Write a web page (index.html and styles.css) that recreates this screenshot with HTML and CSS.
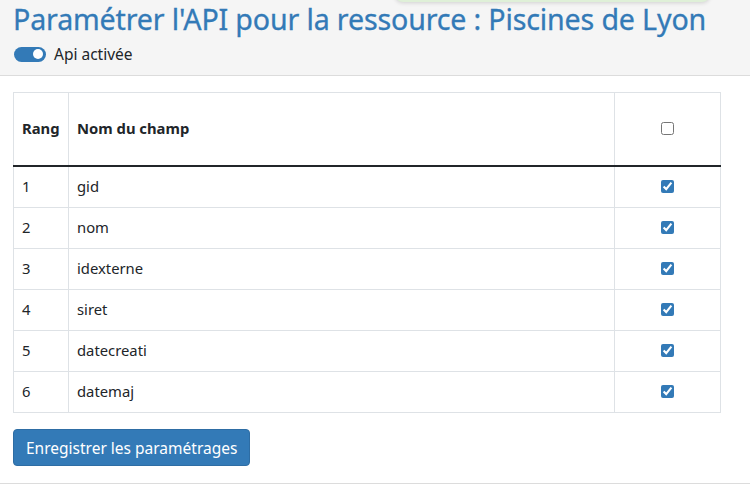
FILE: index.html
```html
<!DOCTYPE html>
<html lang="fr">
<head>
<meta charset="utf-8">
<title>Paramétrer l'API</title>
<link rel="stylesheet" href="styles.css">
</head>
<body>
<div class="toast"></div>
<header class="header">
  <h1 class="title">Paramétrer l'API pour la ressource : Piscines de Lyon</h1>
  <label class="switch-row">
    <span class="switch"><span class="knob"></span></span>
    <span class="switch-label">Api activée</span>
  </label>
</header>
<main class="main">
  <table class="fields">
    <thead>
      <tr>
        <th class="col-rank">Rang</th>
        <th class="col-name">Nom du champ</th>
        <th class="col-check"><input type="checkbox"></th>
      </tr>
    </thead>
    <tbody>
      <tr><td>1</td><td>gid</td><td class="col-check"><input type="checkbox" checked></td></tr>
      <tr><td>2</td><td>nom</td><td class="col-check"><input type="checkbox" checked></td></tr>
      <tr><td>3</td><td>idexterne</td><td class="col-check"><input type="checkbox" checked></td></tr>
      <tr><td>4</td><td>siret</td><td class="col-check"><input type="checkbox" checked></td></tr>
      <tr><td>5</td><td>datecreati</td><td class="col-check"><input type="checkbox" checked></td></tr>
      <tr><td>6</td><td>datemaj</td><td class="col-check"><input type="checkbox" checked></td></tr>
    </tbody>
  </table>
  <button class="btn" type="button">Enregistrer les paramétrages</button>
</main>
<footer class="footer"></footer>
</body>
</html>
```
FILE: styles.css
```css
html, body {
  margin: 0;
  padding: 0;
  background: #fff;
}
body {
  font-family: "Noto Sans", "Open Sans", sans-serif;
  color: #212529;
  position: relative;
  overflow: hidden;
  height: 495px;
}
.toast {
  position: absolute;
  left: 395px;
  top: -40px;
  width: 315px;
  height: 42px;
  background: #dff0d8;
  border-radius: 8px;
  box-shadow: 0 1px 4px rgba(0, 0, 0, 0.15);
  z-index: 2;
}
.header {
  background: #f5f5f5;
  border-bottom: 1px solid #dcdcdc;
  padding: 2px 13px 0;
  height: 73px;
  box-sizing: content-box;
}
.title {
  margin: 0;
  font-size: 28.6px;
  font-weight: 400;
  line-height: 34px;
  color: #337ab7;
  letter-spacing: -0.15px;
  white-space: nowrap;
  -webkit-text-stroke: 0.3px #337ab7;
}
.switch-row {
  display: flex;
  align-items: center;
  gap: 8px;
  margin-top: 8px;
  margin-left: 1px;
}
.switch {
  display: flex;
  align-items: center;
  justify-content: flex-end;
  width: 32px;
  height: 15px;
  border-radius: 8px;
  background: #337ab7;
  padding: 0 3px;
  box-sizing: border-box;
}
.knob {
  width: 10px;
  height: 10px;
  border-radius: 50%;
  background: #fff;
}
.switch-label {
  font-size: 15.5px;
  line-height: 20px;
  color: #212529;
}
.main {
  padding: 16px 13px 0;
}
.fields {
  width: 708px;
  border-collapse: collapse;
  font-size: 14.8px;
  border: 1px solid #dee2e6;
}
.fields th, .fields td {
  border-left: 1px solid #dee2e6;
  border-right: 1px solid #dee2e6;
  text-align: left;
  padding: 7px 8px 9px;
  line-height: 24px;
}
.fields th {
  height: 56px;
  font-weight: 700;
  border-bottom: 2px solid #212529;
}
.fields td {
  border-top: 1px solid #dee2e6;
}
.fields tbody tr:first-child td {
  border-top: none;
}
.col-rank {
  width: 38px;
}
.col-check {
  width: 89px;
}
.fields .col-check {
  text-align: center;
}
.fields input[type="checkbox"] {
  display: block;
  margin: 1px auto 0;
  accent-color: #337ab7;
  width: 13px;
  height: 13px;
}
.btn {
  display: block;
  margin-top: 16px;
  height: 37px;
  padding: 0 12px;
  font-family: inherit;
  font-size: 15.5px;
  color: #fff;
  background: #337ab7;
  border: 1px solid #2e6da4;
  border-radius: 4px;
}
.footer {
  margin-top: 17px;
  border-top: 1px solid #dcdcdc;
}
```
